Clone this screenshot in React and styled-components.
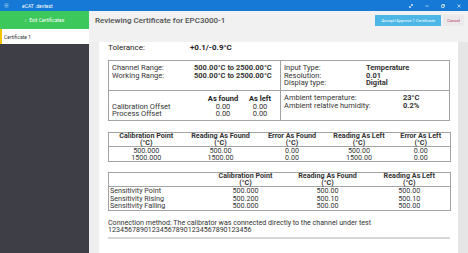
import React from 'react';
import styled, { createGlobalStyle } from 'styled-components';

const GlobalStyle = createGlobalStyle`
  html, body {
    margin: 0;
    padding: 0;
    background: #ffffff;
  }
  body {
    font-family: Roboto, 'Liberation Sans', sans-serif;
    color: #222;
  }
`;

const Window = styled.div`
  width: 468px;
  height: 253px;
  display: flex;
  flex-direction: column;
  overflow: hidden;
`;

const TitleBar = styled.div`
  height: 11px;
  flex: none;
  background: #1779d6;
  display: flex;
  align-items: center;
  padding: 0 4px;
  color: #fff;
  font-size: 5px;
`;

const AppName = styled.span`
  margin-left: 13px;
  flex: 1;
`;

const WinButtons = styled.div`
  display: flex;
  gap: 10px;
  margin-right: 2px;
  align-items: center;
`;

const Body = styled.div`
  flex: 1;
  display: flex;
  min-height: 0;
`;

const Sidebar = styled.div`
  width: 89px;
  flex: none;
  background: #3e3e46;
  display: flex;
  flex-direction: column;
`;

const ExitButton = styled.div`
  height: 18px;
  background: #3cc85a;
  color: #fff;
  font-size: 5px;
  display: flex;
  align-items: center;
  justify-content: center;
  gap: 3px;
`;

const CertItem = styled.div`
  height: 15px;
  background: #fff;
  border-left: 2px solid #f3c300;
  padding-left: 2px;
  font-size: 5px;
  color: #333;
  display: flex;
  align-items: center;
`;

const Main = styled.div`
  flex: 1;
  display: flex;
  flex-direction: column;
  min-width: 0;
`;

const Header = styled.div`
  height: 31px;
  flex: none;
  background: #f1f1f1;
  display: flex;
  align-items: flex-start;
  padding: 0 4px 0 6px;
`;

const Title = styled.h1`
  margin: 5px 0 0;
  flex: 1;
  font-size: 8px;
  font-weight: 500;
  color: #505050;
  line-height: 10px;
`;

const Button = styled.div`
  margin-top: 4px;
  height: 11px;
  display: flex;
  align-items: center;
  padding: 0 ${p => (p.$primary ? '6px' : '4px')};
  font-size: 4.2px;
  background: ${p => (p.$primary ? '#4cb7e7' : '#ebe8e9')};
  color: ${p => (p.$primary ? '#fff' : '#c0336b')};
  margin-left: ${p => (p.$primary ? '0' : '2px')};
`;

const Content = styled.div`
  flex: 1;
  display: flex;
  background: #e8e8e8;
  min-height: 0;
`;

const Gutter = styled.div`
  width: 10px;
  flex: none;
  background: ${p => (p.$dark ? '#e6e6e6' : '#eeeeee')};
`;

const Page = styled.div`
  flex: 1;
  background: #fff;
  padding: 1px 8px 0 9px;
  font-size: 7.5px;
  line-height: 7.5px;
  overflow: hidden;
`;

const ToleranceRow = styled.div`
  display: grid;
  grid-template-columns: 82px 1fr;
  font-size: 8px;
  line-height: 8px;
  padding: 1px 0 0;
  height: 16px;
`;

const Bold = styled.span`
  font-weight: 700;
`;

const InfoBox = styled.div`
  display: grid;
  grid-template-columns: 172px 1fr;
  grid-template-rows: 30px 29px;
  border: 1px solid #a3a3a3;
`;

const Cell = styled.div`
  padding: ${p => p.$top || 2}px 4px 0 3px;
  border-right: ${p => (p.$left ? '1px solid #a3a3a3' : 'none')};
  border-bottom: ${p => (p.$upper ? '1px solid #a3a3a3' : 'none')};
  color: #333;
`;

const Pairs = styled.div`
  display: grid;
  grid-template-columns: ${p => p.$cols};
  color: #333;
`;

const OffsetGrid = styled.div`
  display: grid;
  grid-template-columns: 1fr 42px 32px;
  color: #333;
`;

const Center = styled.span`
  text-align: center;
  font-weight: ${p => (p.$bold ? 700 : 400)};
  color: ${p => (p.$bold ? '#222' : '#333')};
`;

const Table = styled.table`
  width: 100%;
  border-collapse: collapse;
  border: 1px solid #a3a3a3;
  margin-top: ${p => p.$gap}px;
  table-layout: fixed;
  font-size: 7.2px;
  line-height: 6.5px;
`;

const Th = styled.th`
  font-weight: 700;
  text-align: center;
  vertical-align: top;
  padding: 0;
  height: 13px;
  line-height: 6.5px;
  color: #333;
  border-bottom: 1px solid #a3a3a3;
`;

const Td = styled.td`
  padding: 0 0 0 ${p => (p.$left ? '1px' : '0')};
  text-align: ${p => (p.$left ? 'left' : 'center')};
  vertical-align: middle;
  color: #333;
  height: ${p => p.$h}px;
  line-height: ${p => p.$h}px;
`;

const Note = styled.div`
  margin-top: 8px;
  line-height: 7.5px;
  color: #333;
  font-size: 7.1px;
  padding-bottom: 3px;
  border-bottom: 2px solid #d6d6d6;
`;

const Icon = ({ children }) => (
  <svg width="6" height="6" viewBox="0 0 12 12" fill="none" stroke="#fff" strokeWidth="1.2">
    {children}
  </svg>
);

const calRows = [
  ['500.000', '500.00', '0.00', '500.00', '0.00'],
  ['1500.000', '1500.00', '0.00', '1500.00', '0.00'],
];

const sensRows = [
  ['Sensitivity Point', '500.000', '500.00', '500.00'],
  ['Sensitivity Rising', '500.200', '500.10', '500.10'],
  ['Sensitivity Falling', '500.000', '500.00', '500.00'],
];

function HeadCell({ label }) {
  return (
    <Th>
      {label}
      <br />
      (°C)
    </Th>
  );
}

export default function App() {
  return (
    <Window>
      <GlobalStyle />
      <TitleBar>
        <svg width="5" height="5" viewBox="0 0 10 10" stroke="rgba(255,255,255,0.7)" strokeWidth="1.2">
          <path d="M1 2h8M1 5h8M1 8h8" />
        </svg>
        <AppName>eCAT .devtest</AppName>
        <WinButtons>
          <Icon><path d="M3 9l6-6M6 3h3v3M3 6v3h3" /></Icon>
          <Icon><path d="M3 6h6" /></Icon>
          <Icon><path d="M3 4h5v5H3zM5 4V3h4v4H8" /></Icon>
          <Icon><path d="M3 3l6 6M9 3l-6 6" /></Icon>
        </WinButtons>
      </TitleBar>
      <Body>
        <Sidebar>
          <ExitButton>
            <span>‹</span>
            <span>Exit Certificates</span>
          </ExitButton>
          <CertItem>Certificate 1</CertItem>
        </Sidebar>
        <Main>
          <Header>
            <Title>Reviewing Certificate for EPC3000-1</Title>
            <Button $primary>Accept/Approve 1 Certificate</Button>
            <Button>Cancel</Button>
          </Header>
          <Content>
            <Gutter />
            <Page>
              <ToleranceRow>
                <span>Tolerance:</span>
                <Bold>+0.1/-0.9°C</Bold>
              </ToleranceRow>
              <InfoBox>
                <Cell $left $upper $top={3}>
                  <Pairs $cols="82px 1fr">
                    <span>Channel Range:</span>
                    <Bold>500.00°C to 2500.00°C</Bold>
                    <span>Working Range:</span>
                    <Bold>500.00°C to 2500.00°C</Bold>
                  </Pairs>
                </Cell>
                <Cell $upper $top={3}>
                  <Pairs $cols="82px 1fr">
                    <span>Input Type:</span>
                    <Bold>Temperature</Bold>
                    <span>Resolution:</span>
                    <Bold>0.01</Bold>
                    <span>Display type:</span>
                    <Bold>Digital</Bold>
                  </Pairs>
                </Cell>
                <Cell $left $top={4}>
                  <OffsetGrid>
                    <span />
                    <Center $bold>As found</Center>
                    <Center $bold>As left</Center>
                    <span>Calibration Offset</span>
                    <Center>0.00</Center>
                    <Center>0.00</Center>
                    <span>Process Offset</span>
                    <Center>0.00</Center>
                    <Center>0.00</Center>
                  </OffsetGrid>
                </Cell>
                <Cell $top={3}>
                  <Pairs $cols="119px 1fr">
                    <span>Ambient temperature:</span>
                    <Bold>23°C</Bold>
                    <span>Ambient relative humidity:</span>
                    <Bold>0.2%</Bold>
                  </Pairs>
                </Cell>
              </InfoBox>
              <Table $gap={11}>
                <colgroup>
                  <col style={{ width: 75 }} />
                  <col style={{ width: 74 }} />
                  <col style={{ width: 69 }} />
                  <col style={{ width: 65 }} />
                  <col style={{ width: 59 }} />
                </colgroup>
                <thead>
                  <tr>
                    <HeadCell label="Calibration Point" />
                    <HeadCell label="Reading As Found" />
                    <HeadCell label="Error As Found" />
                    <HeadCell label="Reading As Left" />
                    <HeadCell label="Error As Left" />
                  </tr>
                </thead>
                <tbody>
                  {calRows.map(r => (
                    <tr key={r[0]}>
                      {r.map((v, i) => (
                        <Td key={i} $h={7}>{v}</Td>
                      ))}
                    </tr>
                  ))}
                </tbody>
              </Table>
              <Table $gap={10}>
                <colgroup>
                  <col style={{ width: 96 }} />
                  <col style={{ width: 82 }} />
                  <col style={{ width: 82 }} />
                  <col style={{ width: 82 }} />
                </colgroup>
                <thead>
                  <tr>
                    <Th />
                    <HeadCell label="Calibration Point" />
                    <HeadCell label="Reading As Found" />
                    <HeadCell label="Reading As Left" />
                  </tr>
                </thead>
                <tbody>
                  {sensRows.map(r => (
                    <tr key={r[0]}>
                      {r.map((v, i) => (
                        <Td key={i} $left={i === 0} $h={7.5}>{v}</Td>
                      ))}
                    </tr>
                  ))}
                </tbody>
              </Table>
              <Note>
                Connection method: The calibrator was connected directly to the channel under test
                <br />
                123456789012345678901234567890123456
              </Note>
            </Page>
            <Gutter $dark />
          </Content>
        </Main>
      </Body>
    </Window>
  );
}
